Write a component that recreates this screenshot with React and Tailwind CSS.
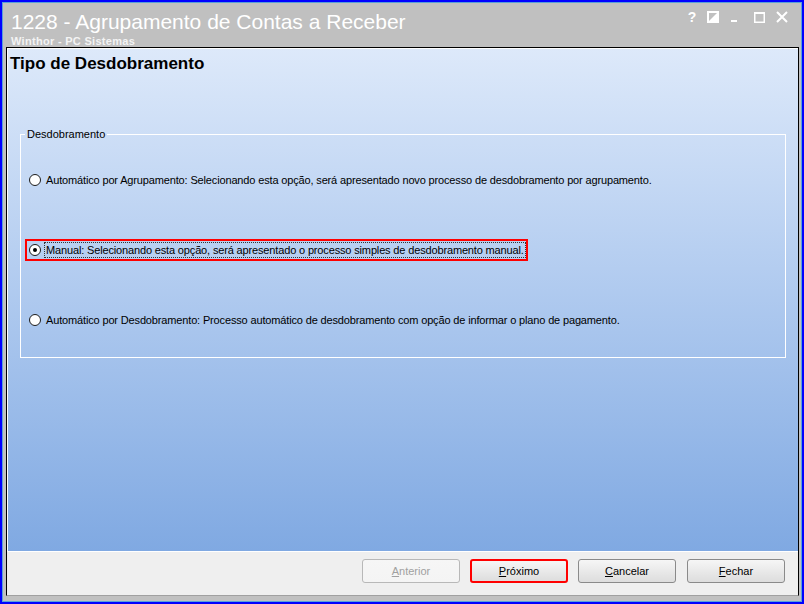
import React from 'react';

const ui = { fontFamily: '"Liberation Sans", Arial, sans-serif' };

const Radio = ({ checked }) => (
  <span className="w-[12px] h-[12px] rounded-full border border-[#1c1c1c] bg-white flex items-center justify-center shrink-0">
    {checked && <span className="w-[4px] h-[4px] rounded-full bg-black" />}
  </span>
);

const Btn = ({ hot, rest, disabled, red, extra = '' }) => (
  <button
    className={`w-[98px] h-[24px] rounded-[3px] bg-gradient-to-b from-[#f6f6f6] to-[#dddddd] text-[11px] flex items-center justify-center ${extra} ${red ? 'border-2 border-[#ff0000]' : 'border border-[#8a8a8a]'} ${disabled ? 'text-[#a0a0a0] border-[#b8b8b8] from-[#f4f4f4] to-[#f4f4f4]' : 'text-black'}`}
    style={ui}
  >
    <span className="underline">{hot}</span>{rest}
  </button>
);

export default function App() {
  const options = [
    { text: 'Automático por Agrupamento: Selecionando esta opção, será apresentado novo processo de desdobramento por agrupamento.' },
    { text: 'Manual: Selecionando esta opção, será apresentado o processo simples de desdobramento manual.', checked: true },
    { text: 'Automático por Desdobramento: Processo automático de desdobramento com opção de informar o plano de pagamento.' },
  ];

  return (
    <div className="w-[804px] h-[604px] border-2 border-[#0000ff] overflow-hidden" style={ui}>
      <div className="w-full h-full border border-[#5aa0d8] bg-[#c0c0c0] flex flex-col">
        {/* title bar */}
        <div className="h-[44px] shrink-0 flex justify-between pl-[8px] pr-[8px]">
          <div className="flex flex-col text-white">
            <span className="text-[21px] leading-[24px] mt-[7px]">1228 - Agrupamento de Contas a Receber</span>
            <span className="text-[11px] font-bold leading-[12px] mt-[1px] tracking-[0.3px] text-[#f4f4f4]">Winthor - PC Sistemas</span>
          </div>
          <div className="flex items-start pt-[8px] text-white">
            <span className="w-[14px] text-center text-[14px] font-bold leading-[14px] mt-[-1px]">?</span>
            <svg width="26" height="12" viewBox="0 0 26 12">
              <rect x="9" y="1" width="10" height="10" fill="none" stroke="white" strokeWidth="2" />
              <polygon points="9,11 19,1 19,11" fill="white" />
            </svg>
            <svg width="22" height="12" viewBox="0 0 22 12">
              <rect x="6" y="9" width="6" height="2" fill="white" />
            </svg>
            <svg width="24" height="12" viewBox="0 0 24 12">
              <rect x="7.75" y="1.75" width="9.5" height="9.5" fill="none" stroke="white" strokeWidth="1.5" />
              <rect x="7" y="1" width="11" height="2" fill="white" />
            </svg>
            <svg width="22" height="12" viewBox="0 0 22 12">
              <path d="M6 1 L16 11 M16 1 L6 11" stroke="white" strokeWidth="2" />
            </svg>
          </div>
        </div>

        {/* main panel */}
        <div className="flex-1 flex flex-col ml-[3px] mr-[2px] mb-[5px] border border-black border-b-[#a0a0a0]">
          <div className="flex-1 flex flex-col border-l border-t border-white bg-gradient-to-b from-[#dde9fa] to-[#80a9e2]">
            <h1 className="text-[17px] font-bold text-black leading-[19px] mt-[5px] ml-[2px]" style={ui}>Tipo de Desdobramento</h1>
            <fieldset className="mx-[12px] mt-[55px] h-[230px] border border-white px-0">
              <legend className="ml-[4px] px-[2px] text-[11px] leading-[13px] text-black">Desdobramento</legend>
              <div className="flex flex-col gap-[58px] mt-[33px] pl-[6px]">
                {options.map((o, i) => (
                  <div key={i} className="h-[12px] flex items-center">
                    <div className={`flex items-center gap-[4px] pl-[2px] pr-[1px] py-[2px] ${o.checked ? 'outline-2 outline-[#ff0000]' : 'outline-2 outline-transparent'}`}>
                      <Radio checked={o.checked} />
                      <span className={`text-[11px] leading-[14px] tracking-[-0.15px] text-black px-[1px] ${o.checked ? 'outline-1 outline-dotted outline-[#333]' : ''}`}>{o.text}</span>
                    </div>
                  </div>
                ))}
              </div>
            </fieldset>
          </div>
          <div className="h-[44px] shrink-0 border-t border-white bg-[#efefef] flex items-start justify-end gap-[10px] pr-[13px] pt-[7px]">
            <Btn hot="A" rest="nterior" disabled />
            <Btn hot="P" rest="róximo" red />
            <Btn hot="C" rest="ancelar" extra="mr-[1px]" />
            <Btn hot="F" rest="echar" />
          </div>
        </div>
      </div>
    </div>
  );
}
